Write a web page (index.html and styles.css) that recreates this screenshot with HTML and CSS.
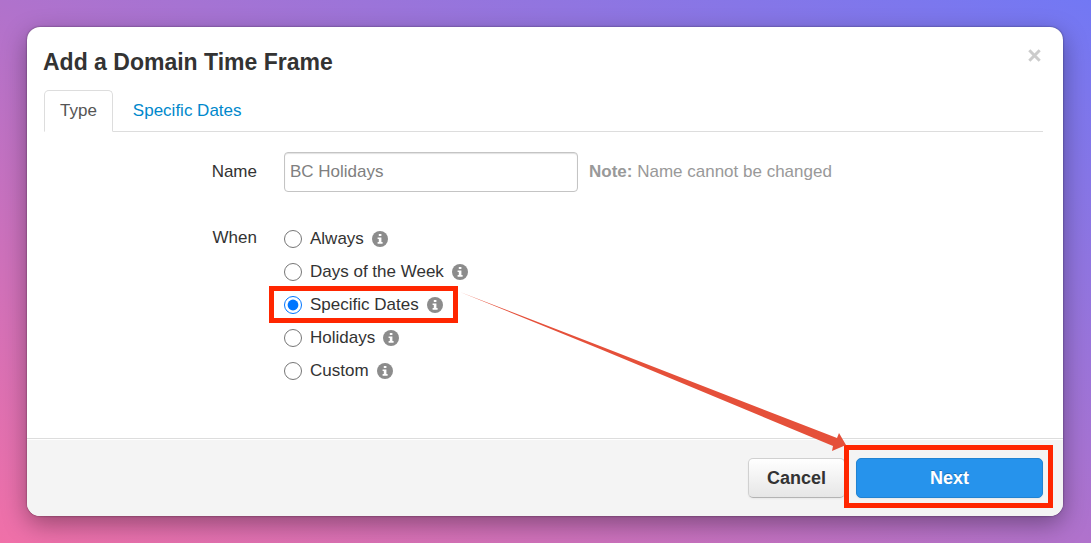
FILE: index.html
```html
<!DOCTYPE html>
<html lang="en">
<head>
    <meta charset="UTF-8">
    <meta name="viewport" content="width=device-width, initial-scale=1.0">
    <title>Add a Domain Time Frame</title>
    <link rel="stylesheet" href="styles.css">
</head>
<body>

<!-- Info icon, used by every option -->
<svg class="symbols" aria-hidden="true">
    <symbol id="info" viewBox="0 0 16 16">
        <circle cx="8" cy="8" r="8" fill="#8c8c8c"/>
        <path d="M6.8 3h2.6v2.1H6.8zM5.6 6.4h3.8v4.7h1.2v1.6H5.6v-1.6h1.2V8H5.6z" fill="#fff"/>
    </symbol>
</svg>

<form class="modal">
    <div class="modal-header">
        <h1>Add a Domain Time Frame</h1>
        <button type="button" class="close" aria-label="Close">
            <svg viewBox="0 0 13 13"><path d="M1.3 1.3l10.4 10.4M11.7 1.3l-10.4 10.4"/></svg>
        </button>
    </div>

    <div class="modal-body">
        <!-- Tabs -->
        <nav class="tabs">
            <a href="#type" class="tab active">Type</a>
            <a href="#dates" class="tab">Specific Dates</a>
        </nav>

        <!-- Name -->
        <div class="form-row name-row">
            <label class="row-label" for="name">Name</label>
            <div class="name-field">
                <input type="text" id="name" name="name" value="BC Holidays" readonly>
                <span class="note"><b>Note:</b> Name cannot be changed</span>
            </div>
        </div>

        <!-- When -->
        <div class="form-row" role="radiogroup" aria-labelledby="whenLabel">
            <span class="row-label" id="whenLabel">When</span>
            <div class="options">
                <label class="option">
                    <input type="radio" name="when" value="always">
                    Always
                    <svg class="info"><use href="#info"/></svg>
                </label>
                <label class="option">
                    <input type="radio" name="when" value="days">
                    Days of the Week
                    <svg class="info"><use href="#info"/></svg>
                </label>
                <label class="option highlight">
                    <input type="radio" name="when" value="dates" checked>
                    Specific Dates
                    <svg class="info"><use href="#info"/></svg>
                </label>
                <label class="option">
                    <input type="radio" name="when" value="holidays">
                    Holidays
                    <svg class="info"><use href="#info"/></svg>
                </label>
                <label class="option">
                    <input type="radio" name="when" value="custom">
                    Custom
                    <svg class="info"><use href="#info"/></svg>
                </label>
            </div>
        </div>
    </div>

    <div class="modal-footer">
        <button type="button" class="btn">Cancel</button>
        <div class="next-wrap highlight">
            <button type="submit" class="btn btn-primary">Next</button>
        </div>
    </div>

    <!-- Arrow from the selected option to the Next button -->
    <svg class="arrow" viewBox="0 0 388 162" preserveAspectRatio="none" aria-hidden="true">
        <path d="M1 2L141 56L378 148L380 143L387 155L373 161L374 156L141 59Z"/>
    </svg>
</form>

</body>
</html>
```
FILE: styles.css
```css
* {
    box-sizing: border-box;
}

body {
    margin: 0;
    min-height: 100vh;
    padding: 27px 28px 27px 27px;
    background: linear-gradient(to top right, #f070a8, #b072cc 50%, #7278f4);
    font-family: "Liberation Sans", Arial, sans-serif;
    font-size: 17px;
    line-height: 20px;
    color: #333;
}

input, button {
    font: inherit;
}

.symbols {
    display: none;
}

.modal {
    position: relative;
    background-color: #fff;
    border-radius: 13px;
    box-shadow: 0 8px 24px rgba(0, 0, 0, 0.35), 0 0 2px rgba(0, 0, 0, 0.5);
}

.modal-header {
    display: flex;
    justify-content: space-between;
    align-items: flex-start;
    padding: 20px 20px 13px 16px;
}

h1 {
    margin: 0;
    font-size: 23px;
    line-height: 30px;
}

.close {
    display: flex;
    padding: 2px;
    border: none;
    background: none;
    cursor: pointer;
}

.close svg {
    width: 13px;
    height: 13px;
    fill: none;
    stroke: #ccc;
    stroke-width: 3;
}

.modal-body {
    padding: 0 20px 51px 17px;
}

/* Tabs */
.tabs {
    display: flex;
    gap: 4px;
    margin-bottom: 20px;
    border-bottom: 1px solid #ddd;
}

.tab {
    margin-bottom: -1px;
    padding: 10px 15px;
    border: 1px solid transparent;
    border-radius: 5px 5px 0 0;
    color: #0088cc;
    text-decoration: none;
}

.tab.active {
    border-color: #ddd #ddd #fff;
    color: #555;
}

/* Form */
.form-row {
    display: grid;
    grid-template-columns: 213px 1fr;
    column-gap: 27px;
}

.row-label {
    padding-top: 6px;
    text-align: right;
}

.name-row {
    margin-bottom: 30px;
}

.name-row .row-label {
    padding-top: 10px;
}

.name-field {
    display: flex;
    align-items: center;
    gap: 11px;
}

.name-field input {
    width: 294px;
    height: 40px;
    padding: 0 5px;
    border: 1px solid #c4c4c4;
    border-radius: 4px;
    box-shadow: inset 0 1px 1px rgba(0, 0, 0, 0.12);
    color: #808080;
}

.note {
    color: #999;
}

.options {
    display: flex;
    flex-direction: column;
    align-items: flex-start;
}

.option {
    display: flex;
    align-items: center;
    gap: 8px;
    height: 33px;
}

.option input {
    width: 18px;
    height: 18px;
    margin: 0;
}

.info {
    width: 16px;
    height: 16px;
}

/* Footer */
.modal-footer {
    display: flex;
    justify-content: flex-end;
    gap: 11px;
    padding: 19px 20px 18px;
    border-top: 1px solid #ddd;
    border-radius: 0 0 13px 13px;
    background-color: #f4f4f4;
    box-shadow: inset 0 1px 0 #fff;
}

.btn {
    height: 40px;
    padding: 0 18px;
    border: 1px solid #d0d0d0;
    border-bottom-color: #b3b3b3;
    border-radius: 5px;
    background: linear-gradient(#fff, #e6e6e6);
    box-shadow: 0 1px 2px rgba(0, 0, 0, 0.05);
    font-size: 18px;
    font-weight: bold;
    color: #333;
    cursor: pointer;
}

.btn-primary {
    width: 187px;
    border-color: #2183d2;
    background: #2693ec;
    color: #fff;
    text-shadow: 0 -1px 0 rgba(0, 0, 0, 0.25);
}

/* Red frames and arrow */
.highlight {
    position: relative;
}

.highlight::after {
    content: "";
    position: absolute;
    inset: -2px -15px;
    border: 5px solid #ff2600;
    pointer-events: none;
}

.next-wrap::after {
    inset: -13px -10px -10px -12px;
}

.arrow {
    position: absolute;
    left: 432px;
    bottom: 64px;
    width: calc(100% - 648px);
    height: 162px;
    fill: #e5503a;
    pointer-events: none;
}
```
